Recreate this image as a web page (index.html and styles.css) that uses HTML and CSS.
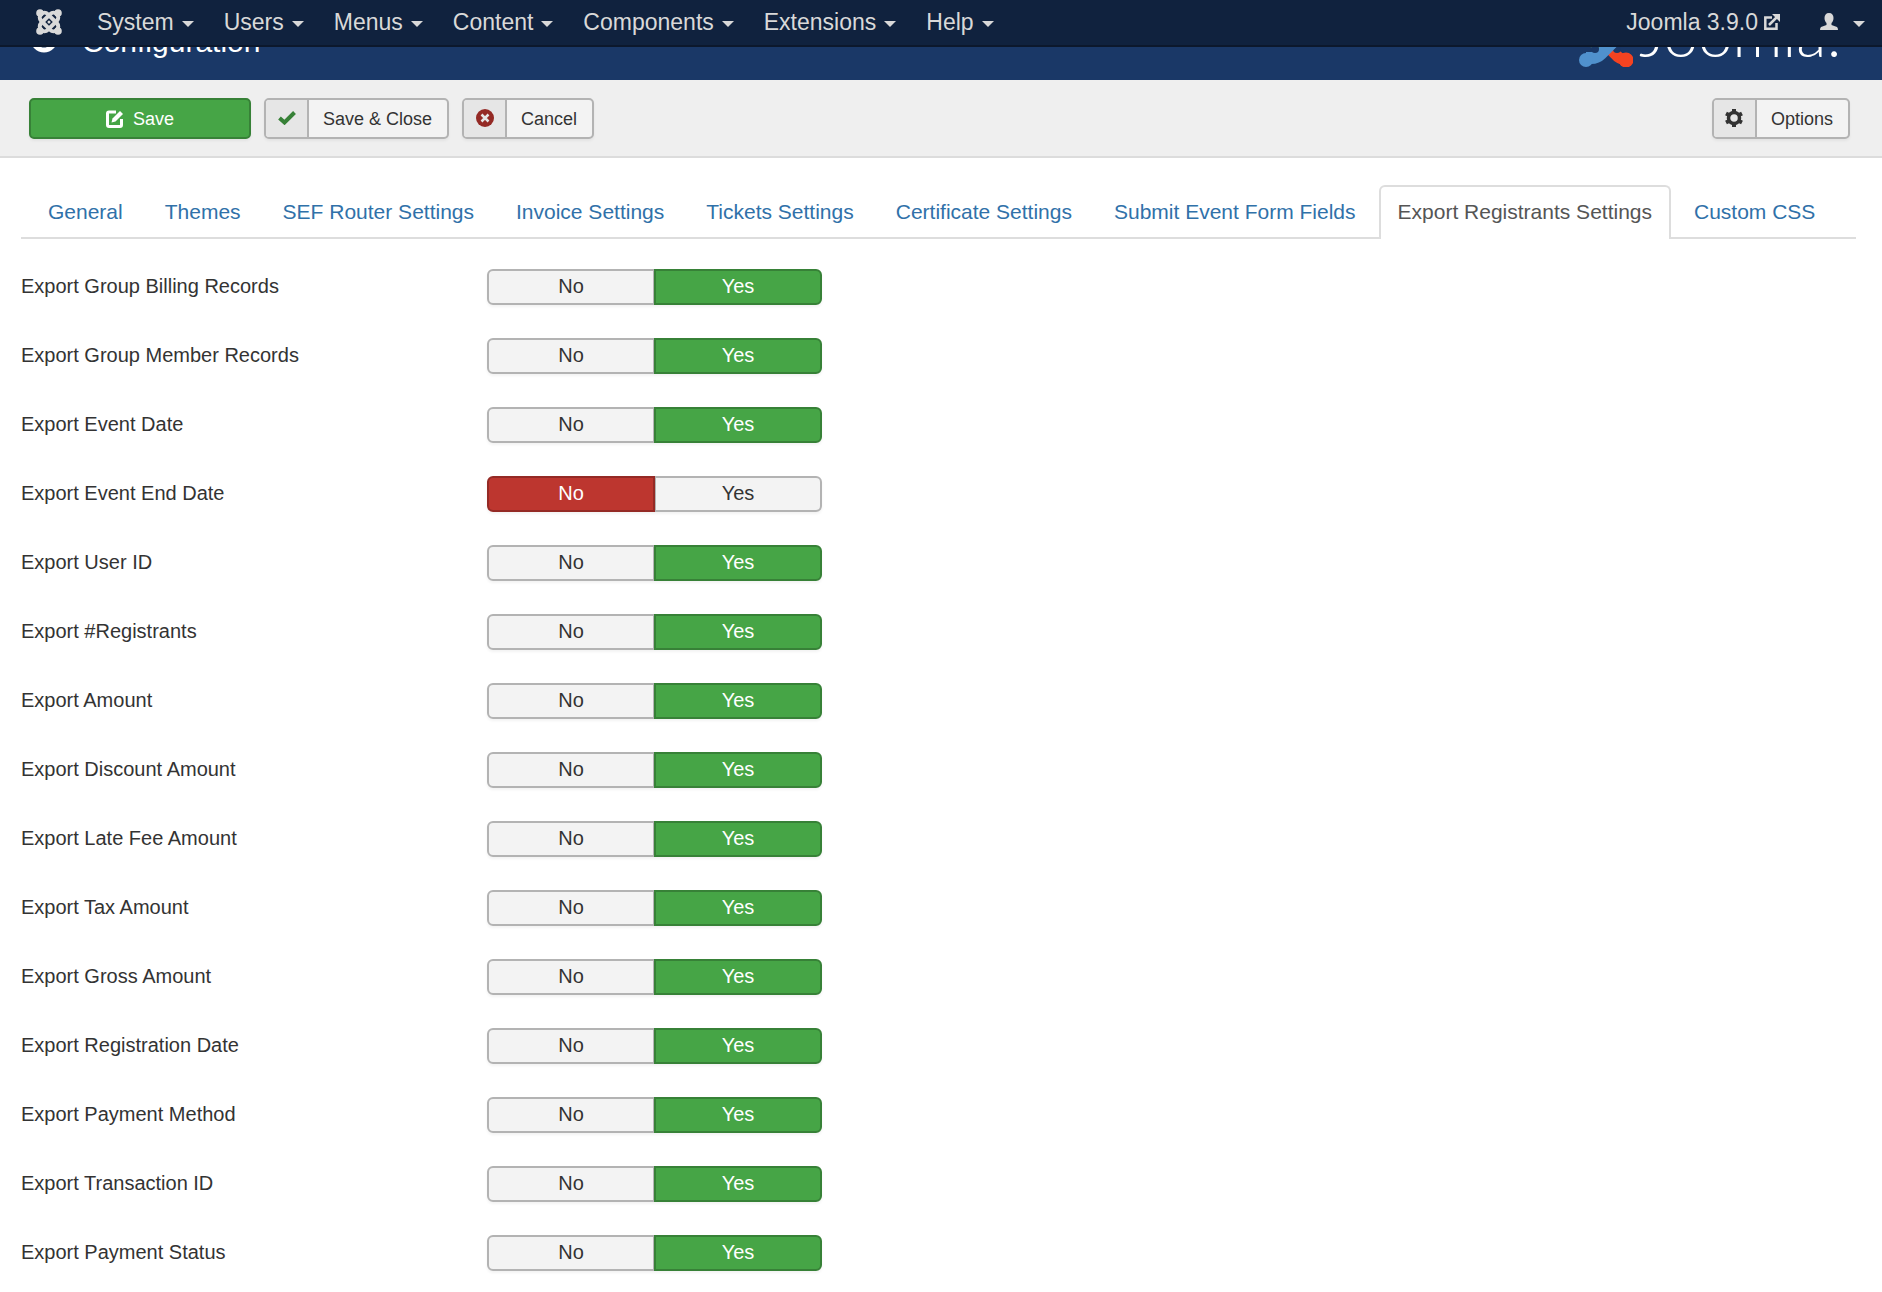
FILE: index.html
```html
<!DOCTYPE html>
<html lang="en">
<head>
<meta charset="utf-8">
<title>Configuration</title>
<link rel="stylesheet" href="styles.css">
</head>
<body>
<nav class="navbar">
  <a class="brand" href="#" aria-label="Home">
    <svg width="26" height="26" viewBox="0 0 26 26" fill="none" stroke="#d9d9d9" stroke-width="4"><g fill="#d9d9d9" stroke="none"><circle cx="4" cy="4" r="3.800"/><circle cx="22" cy="4" r="3.800"/><circle cx="4" cy="22" r="3.800"/><circle cx="22" cy="22" r="3.800"/><circle cx="13" cy="13" r="1.500"/></g><rect x="2" y="8.300" width="22" height="9.400" rx="4.500" transform="rotate(45 13 13)"/><rect x="2" y="8.300" width="22" height="9.400" rx="4.500" transform="rotate(-45 13 13)"/></svg>
  </a>
  <ul class="menu">
    <li><a href="#">System<span class="caret"></span></a></li>
    <li><a href="#">Users<span class="caret"></span></a></li>
    <li><a href="#">Menus<span class="caret"></span></a></li>
    <li><a href="#">Content<span class="caret"></span></a></li>
    <li><a href="#">Components<span class="caret"></span></a></li>
    <li><a href="#">Extensions<span class="caret"></span></a></li>
    <li><a href="#">Help<span class="caret"></span></a></li>
  </ul>
  <a class="site" href="#">Joomla 3.9.0
    <svg width="16" height="16" viewBox="0 0 16 16" fill="none" stroke="#d9d9d9" stroke-width="2.500"><path d="M8 3.500H1.300V14.700H12.500V9M5 11L13 3"/><path d="M8 0H16V8Z" fill="#d9d9d9" stroke="none"/></svg>
  </a>
  <a class="user" href="#" aria-label="User menu">
    <svg width="18" height="17" viewBox="0 0 18 17" fill="#d9d9d9"><path d="M9 0C12 0 13.500 2 13.500 5C13.500 7.500 12.500 9 11.500 10V12L17 14Q18 15 18 17H0Q0 15 1 14L6.500 12V10C5.500 9 4.500 7.500 4.500 5C4.500 2 6 0 9 0Z"/></svg>
    <span class="caret"></span>
  </a>
</nav>
<header class="header">
  <svg class="title-icon" width="28" height="28" viewBox="0 0 28 28" fill="none" stroke="#fff" stroke-width="5"><circle cx="14" cy="14" r="11"/></svg>
  <h1 class="title">Configuration</h1>
  <a class="logo" href="#">
    <svg width="54" height="54" viewBox="0 0 54 54" fill="none" stroke-width="11"><path d="M47 47Q40 46 36 41L24 29" stroke="#f44321"/><circle cx="47" cy="47" r="7.500" fill="#f44321" stroke="none"/><circle cx="47" cy="47" r="7" fill="#f44321" stroke="none"/><path d="M8 20Q8 26 14 30L21 37" stroke="#7ac143" stroke-width="9"/><circle cx="38" cy="36" r="4" fill="#1a3867" stroke="none"/><path d="M7 45H12Q18 45 22 41L38 25" stroke="#5091cd" stroke-width="12"/><circle cx="7" cy="47" r="7" fill="#5091cd" stroke="none"/><circle cx="16" cy="36" r="4" fill="#1a3867" stroke="none"/></svg>
    <span>Joomla!</span>
  </a>
</header>
<div class="toolbar">
  <button class="btn btn-save" type="button">
    <svg width="18" height="18" viewBox="0 0 18 18" fill="none" stroke="#fff"><path d="M10 2H3Q1.500 2 1.500 3.500V15Q1.500 16.500 3 16.500H14Q15.500 16.500 15.500 15V9" stroke-width="3"/><path d="M5.500 12.500L6.500 8.500L14 1L17 4L9.500 11.500Z" fill="#fff" stroke="none"/></svg>
    Save
  </button>
  <button class="btn" type="button">
    <span class="btn-icon"><svg width="18" height="14" viewBox="0 0 18 14" fill="none" stroke="#378137" stroke-width="4"><path d="M1.500 7L6.500 11.500L16.500 1.500"/></svg></span>
    <span class="btn-text">Save &amp; Close</span>
  </button>
  <button class="btn" type="button">
    <span class="btn-icon"><svg width="18" height="18" viewBox="0 0 18 18"><circle cx="9" cy="9" r="9" fill="#942a25"/><path d="M5.500 5.500L12.500 12.500M12.500 5.500L5.500 12.500" stroke="#e6e6e6" stroke-width="2.500"/></svg></span>
    <span class="btn-text">Cancel</span>
  </button>
  <button class="btn btn-options" type="button">
    <span class="btn-icon"><svg width="18" height="18" viewBox="0 0 18 18" fill="none" stroke="#333"><circle cx="9" cy="9" r="5.500" stroke-width="3.500"/><path d="M9 0V3M9 15V18M1 4.500L4 6M14 12L17 13.500M1 13.500L4 12M14 6L17 4.500" stroke-width="4"/></svg></span>
    <span class="btn-text">Options</span>
  </button>
</div>
<main class="content">
  <ul class="tabs">
    <li><a href="#">General</a></li>
    <li><a href="#">Themes</a></li>
    <li><a href="#">SEF Router Settings</a></li>
    <li><a href="#">Invoice Settings</a></li>
    <li><a href="#">Tickets Settings</a></li>
    <li><a href="#">Certificate Settings</a></li>
    <li><a href="#">Submit Event Form Fields</a></li>
    <li><a class="active" href="#" aria-current="page">Export Registrants Settings</a></li>
    <li><a href="#">Custom CSS</a></li>
  </ul>
  <form class="settings" id="settings"></form>
</main>
<script src="script.js"></script>
</body>
</html>
```
FILE: script.js
```
const fields = [
  ["Export Group Billing Records", 1],
  ["Export Group Member Records", 1],
  ["Export Event Date", 1],
  ["Export Event End Date", 0],
  ["Export User ID", 1],
  ["Export #Registrants", 1],
  ["Export Amount", 1],
  ["Export Discount Amount", 1],
  ["Export Late Fee Amount", 1],
  ["Export Tax Amount", 1],
  ["Export Gross Amount", 1],
  ["Export Registration Date", 1],
  ["Export Payment Method", 1],
  ["Export Transaction ID", 1],
  ["Export Payment Status", 1]
];
document.getElementById("settings").innerHTML = fields.map(([name, on], i) => `
  <div class="row" role="radiogroup" aria-labelledby="label${i}">
    <span class="row-label" id="label${i}">${name}</span>
    <div class="toggle">
      <input type="radio" name="field${i}" id="no${i}" value="0"${on ? "" : " checked"}>
      <label class="no" for="no${i}">No</label>
      <input type="radio" name="field${i}" id="yes${i}" value="1"${on ? " checked" : ""}>
      <label class="yes" for="yes${i}">Yes</label>
    </div>
  </div>`).join("");
```
FILE: styles.css
```css
* { box-sizing: border-box; }
body {
  margin: 0;
  padding-top: 47px;
  background: #fff;
  color: #333;
  font-family: "Liberation Sans", Arial, sans-serif;
  font-size: 20px;
  line-height: 30px;
}
a { text-decoration: none; }
ul { margin: 0; padding: 0; list-style: none; }
svg { display: block; flex: none; }

.navbar {
  position: fixed;
  inset: 0 0 auto 0;
  z-index: 10;
  display: flex;
  align-items: center;
  height: 47px;
  padding: 0 17px 2px 36px;
  background: #10223e;
  border-bottom: 2px solid #0c182c;
  font-size: 23px;
}
.navbar a { display: flex; align-items: center; color: #d9d9d9; }
.menu { display: flex; gap: 30px; margin-left: 35px; }
.caret {
  margin: 4px 0 0 8px;
  border: 6px solid transparent;
  border-top-color: #d9d9d9;
  border-bottom: 0;
}
.site { gap: 6px; margin-left: auto; }
.user { margin-left: 40px; }
.user .caret { margin-left: 15px; }

.header {
  display: flex;
  align-items: flex-end;
  height: 33px;
  padding: 0 40px 13px 30px;
  overflow: hidden;
  background: #1a3867;
  color: #fff;
}
.title-icon { margin-bottom: 14px; }
.title { margin: 0 0 10px 24px; font-size: 30px; line-height: 30px; font-weight: 400; }
.logo {
  display: flex;
  align-items: flex-end;
  gap: 6px;
  margin-left: auto;
  color: #fff;
  font-family: Lato, sans-serif;
  font-size: 62px;
  font-weight: 300;
  line-height: 60px;
}
.logo span { margin-bottom: 4px; }

.toolbar {
  display: flex;
  gap: 13px;
  padding: 18px 32px 17px 29px;
  background: #efefef;
  border-bottom: 2px solid #dcdcdc;
}
.btn {
  display: flex;
  align-items: stretch;
  height: 41px;
  padding: 0;
  overflow: hidden;
  background: #f3f3f3;
  border: 2px solid #b3b3b3;
  border-radius: 5px;
  box-shadow: 0 2px 3px rgba(0, 0, 0, .05);
  color: #333;
  font: 18px/38px "Liberation Sans", Arial, sans-serif;
}
.btn-save {
  justify-content: center;
  align-items: center;
  gap: 9px;
  width: 222px;
  background: #46a546;
  border-color: #378137;
  color: #fff;
}
.btn-icon {
  display: flex;
  align-items: center;
  justify-content: center;
  width: 43px;
  padding-bottom: 2px;
  background: #e6e6e6;
  border-right: 2px solid #b3b3b3;
}
.btn-text { padding: 0 15px 0 14px; }
.btn-options { margin-left: auto; }

.content { padding: 27px 26px 16px 21px; }
.tabs {
  display: flex;
  gap: 4px;
  padding-left: 8px;
  border-bottom: 2px solid #ddd;
  font-size: 21px;
}
.tabs a {
  display: block;
  height: 54px;
  margin-bottom: -2px;
  padding: 10px 17px;
  border: 2px solid transparent;
  border-bottom: 0;
  border-radius: 6px 6px 0 0;
  color: #3071a9;
  white-space: nowrap;
}
.tabs .active { background: #fff; border-color: #ddd; color: #555; }

.settings { display: grid; gap: 33px; padding-top: 30px; }
.row { display: flex; }
.row-label { width: 466px; padding-top: 2px; }
.toggle {
  position: relative;
  display: flex;
  border-radius: 6px;
  box-shadow: 0 2px 3px rgba(0, 0, 0, .05);
}
.toggle input { position: absolute; opacity: 0; }
.toggle label {
  width: 168px;
  height: 36px;
  border: 2px solid #b3b3b3;
  background: #f3f3f3;
  text-align: center;
}
.toggle .no { border-radius: 6px 0 0 6px; }
.toggle .yes { margin-left: -1px; border-radius: 0 6px 6px 0; }
.toggle :checked + label { position: relative; color: #fff; }
.toggle :checked + .yes { background: #46a546; border-color: #378137; }
.toggle :checked + .no { background: #bd362f; border-color: #942a25; }
```
